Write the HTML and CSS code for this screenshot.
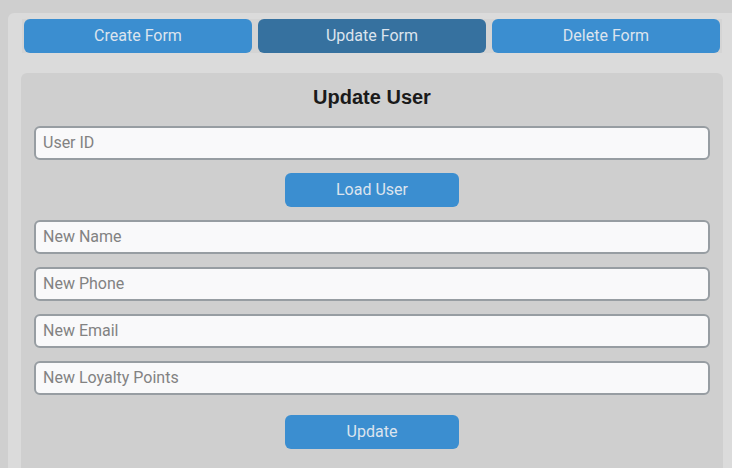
FILE: index.html
```html
<!DOCTYPE html>
<html>
<head>
<meta charset="utf-8">
<link rel="stylesheet" href="styles.css">
</head>
<body>
<div class="app">
  <div class="tabs">
    <button class="tab">Create Form</button>
    <button class="tab active">Update Form</button>
    <button class="tab">Delete Form</button>
  </div>
  <div class="card">
    <h1 class="title">Update User</h1>
    <input class="field" type="text" placeholder="User ID">
    <button class="btn">Load User</button>
    <input class="field" type="text" placeholder="New Name">
    <input class="field" type="text" placeholder="New Phone">
    <input class="field" type="text" placeholder="New Email">
    <input class="field" type="text" placeholder="New Loyalty Points">
    <button class="btn btn-update">Update</button>
  </div>
</div>
</body>
</html>
```

FILE: styles.css
```css
html, body {
  margin: 0;
  padding: 0;
  background: #cfcfcf;
  overflow: hidden;
  height: 468px;
}
.app {
  margin: 13px 0 0 8px;
  width: 760px;
  height: 600px;
  background: #dbdbdb;
  border-radius: 6px;
  padding: 6px 0 0 13px;
  box-sizing: border-box;
}
.tabs {
  display: flex;
  gap: 6px;
  width: 700px;
  box-sizing: border-box;
  padding: 0 2px;
  margin-left: 1px;
  background: #d4d4d4;
}
.tab {
  flex: 0 0 228px;
  height: 34px;
  border: none;
  border-radius: 6px;
  background: #3b8ed0;
  color: #dce4ee;
  font-family: Roboto, "Liberation Sans", sans-serif;
  font-size: 16px;
  padding: 0 0 2px;
}
.tab.active {
  background: #36719f;
}
.card {
  margin-top: 20px;
  width: 702px;
  box-sizing: border-box;
  background: #cfcfcf;
  border-radius: 6px;
  padding: 12px 13px 40px;
  display: flex;
  flex-direction: column;
  align-items: center;
  gap: 13px;
}
.title {
  margin: 0 0 4px;
  font-family: "Liberation Sans", Arial, sans-serif;
  font-weight: bold;
  font-size: 20px;
  line-height: 24px;
  color: #1a1a1a;
}
.field {
  width: 676px;
  height: 34px;
  box-sizing: border-box;
  border: 2px solid #979da2;
  border-radius: 6px;
  background: #f9f9fa;
  padding: 0 7px 1px;
  font-family: Roboto, "Liberation Sans", sans-serif;
  font-size: 16px;
  color: #1a1a1a;
  outline: none;
}
.field::placeholder {
  color: #828282;
}
.btn {
  width: 174px;
  height: 34px;
  border: none;
  border-radius: 6px;
  background: #3b8ed0;
  color: #dce4ee;
  font-family: Roboto, "Liberation Sans", sans-serif;
  font-size: 16px;
  padding: 0 0 2px;
}
.btn-update {
  margin-top: 7px;
}
```
